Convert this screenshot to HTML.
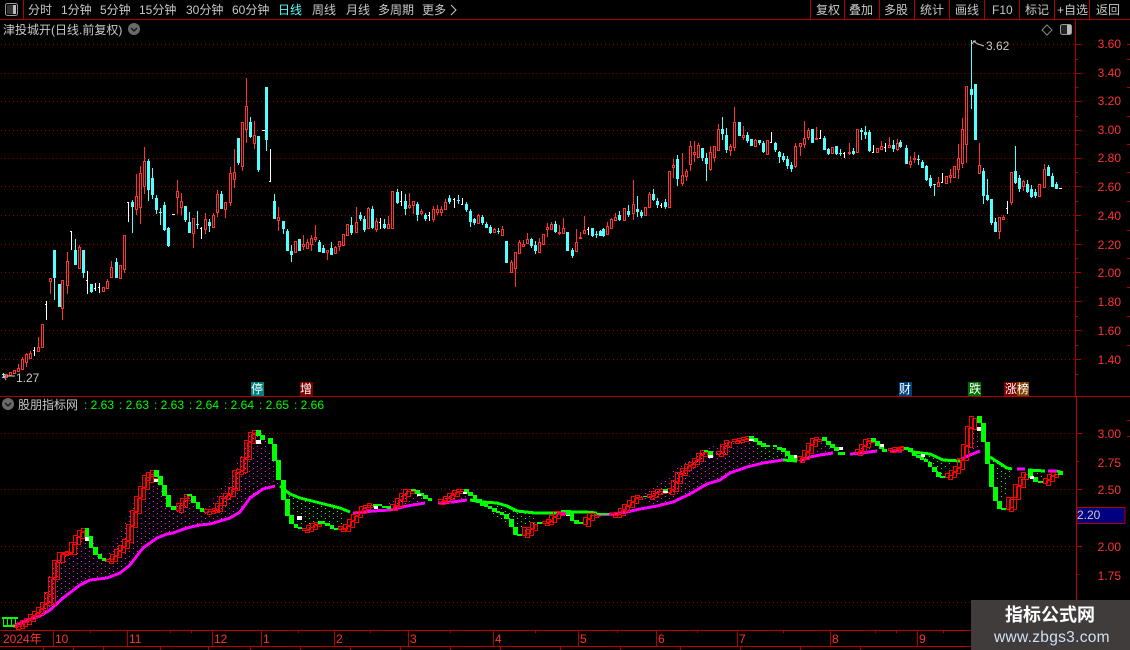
<!DOCTYPE html>
<html><head><meta charset="utf-8"><title>股朋指标网</title>
<style>
html,body{margin:0;padding:0;background:#000;width:1130px;height:650px;overflow:hidden}
svg{display:block}
text{font-family:"Liberation Sans","WenQuanYi Zen Hei","Noto Sans CJK SC",sans-serif;font-size:12px}
.m{fill:#c8c8c8}
.a{fill:#ff3232}
.g{fill:#00ff00}
.w{fill:#fff}
</style></head><body>
<svg width="1130" height="650" viewBox="0 0 1130 650" xmlns="http://www.w3.org/2000/svg">
<defs>
<pattern id="pm" width="8" height="10" patternUnits="userSpaceOnUse"><g fill="#ff00ff" shape-rendering="crispEdges"><rect x="1" y="1" width="1" height="1"/><rect x="1" y="6" width="1" height="1"/><rect x="5" y="3" width="1" height="1"/><rect x="5" y="8" width="1" height="1"/></g></pattern>
<pattern id="pg" width="8" height="10" patternUnits="userSpaceOnUse"><g fill="#00ff00" shape-rendering="crispEdges"><rect x="1" y="1" width="1" height="1"/><rect x="1" y="6" width="1" height="1"/><rect x="5" y="3" width="1" height="1"/><rect x="5" y="8" width="1" height="1"/></g></pattern>
</defs>
<rect width="1130" height="650" fill="#000"/>

<!-- frame -->
<g shape-rendering="crispEdges" stroke="#b00000" fill="none">
<path d="M0 19.5H1130M23.5 0V19M810.5 0V19M844.5 0V19M879.5 0V19M914.5 0V19M949.5 0V19M984.5 0V19M1019.5 0V19M1054.5 0V19M1089.5 0V19"/>
<path d="M0 396.5H1130M1075.5 19V396"/>
<path d="M0 630.5H1075M0 646.5H1075M1076.5 397V640" stroke="#c00000"/>
<path d="M53.5 630V646M127.5 630V646M212.5 630V646M261.5 630V646M334.5 630V646M408.5 630V646M493.5 630V646M578.5 630V646M656.5 630V646M737.5 630V646M830.5 630V646M917.5 630V646"/>
<path d="M90.5 630V633M170.5 630V633M191.5 630V633M298.5 630V633M370.5 630V633M450.5 630V633M535.5 630V633M617.5 630V633M697.5 630V633M783.5 630V633M875.5 630V633M896.5 630V633M943.5 630V633M43.5 646V650M73.5 646V650M103.5 646V650M160.5 646V650M208.5 646V650M250.5 646V650M300.5 646V650M350.5 646V650M400.5 646V650M450.5 646V650M500.5 646V650M560.5 646V650M620.5 646V650M680.5 646V650M740.5 646V650M800.5 646V650M860.5 646V650"/>
<!-- axis ticks -->
<path d="M1075 44.5h6M1075 73.5h6M1075 101.5h6M1075 130.5h6M1075 158.5h6M1075 186.5h6M1075 215.5h6M1075 244.5h6M1075 272.5h6M1075 301.5h6M1075 330.5h6M1075 359.5h6M1075 59.5h3M1075 87.5h3M1075 116.5h3M1075 144.5h3M1075 172.5h3M1075 201.5h3M1075 230.5h3M1075 258.5h3M1075 287.5h3M1075 316.5h3M1075 345.5h3M1075 374.5h3"/>
<path d="M1127 44.5h3M1127 59.5h3M1127 87.5h3M1127 116.5h3M1127 144.5h3M1127 172.5h3M1127 201.5h3M1127 230.5h3M1127 258.5h3M1127 287.5h3M1127 316.5h3M1127 345.5h3M1127 420.5h3M1127 436.5h3"/>
<path d="M1076 433.5h6M1076 461.5h3M1076 489.5h6M1076 518.5h3M1076 546.5h6M1076 574.5h3M1076 602.5h6"/>
</g>
<!-- grid -->
<g stroke="#a00000" stroke-dasharray="1 3" shape-rendering="crispEdges">
<path d="M1 44.5H1075M1 73.5H1075M1 101.5H1075M1 130.5H1075M1 158.5H1075M1 186.5H1075M1 215.5H1075M1 244.5H1075M1 272.5H1075M1 301.5H1075M1 330.5H1075M1 359.5H1075M1 433.5H1075M1 489.5H1075M1 546.5H1075M1 602.5H1075"/>
</g>

<!-- candles -->
<g shape-rendering="crispEdges" fill="none" stroke-width="1">
<path stroke="#ff3232" d="M18.5 364V372M22.5 357V370M26.5 353V367M30.5 351V359M38.5 337V351M50.5 278V294M62.5 280V320M67.5 252V294M79.5 245V268M107.5 279V289M111.5 261V277M124.5 260V273M136.5 174V215M140.5 166V224M144.5 147V194M177.5 180V214M181.5 193V215M193.5 218V248M205.5 213V234M213.5 213V227M217.5 190V217M225.5 202V218M230.5 167V206M234.5 149V188M242.5 122V171M246.5 78V143M254.5 121V149M278.5 207V231M303.5 235V250M307.5 239V248M311.5 235V251M315.5 225V242M327.5 250V260M335.5 246V253M339.5 241V251M356.5 207V232M368.5 207V229M376.5 218V232M388.5 216V229M409.5 193V209M413.5 201V214M421.5 209V215M433.5 206V222M437.5 205V215M441.5 206V216M445.5 199V209M478.5 214V224M494.5 228V232M502.5 226V235M511.5 260V272M515.5 252V287M519.5 240V253M523.5 240V247M527.5 233V243M539.5 238V252M547.5 223V237M551.5 222V229M559.5 225V235M563.5 218V234M576.5 229V251M580.5 232V238M584.5 216V233M607.5 222V234M611.5 218V228M615.5 213V220M633.5 180V220M649.5 192V207M673.5 159V178M682.5 153V186M686.5 169V181M690.5 141V171M694.5 141V162M698.5 143V158M710.5 146V171M714.5 146V162M718.5 124V151M730.5 144V156M734.5 107V151M743.5 126V140M755.5 139V147M795.5 143V168M800.5 143V156M804.5 121V148M808.5 128V140M816.5 127V140M849.5 143V155M881.5 141V149M889.5 137V148M897.5 139V151M910.5 156V168M914.5 152V163M938.5 177V186M950.5 169V183M958.5 144V179M962.5 118V168M966.5 86V163M979.5 143V173M999.5 217V239M1003.5 215V220M1011.5 172V205M1023.5 180V191M1044.5 164V187"/>
<path stroke="#ff3232" fill="#000" d="M5.5 374.5h2V377.5h-2zM9.5 372.5h2V375.5h-2zM13.5 370.5h2V373.5h-2zM17.5 368.5h2V371.5h-2zM21.5 359.5h2V369.5h-2zM25.5 354.5h2V362.5h-2zM29.5 353.5h2V358.5h-2zM37.5 347.5h2V351.5h-2zM41.5 324.5h2V347.5h-2zM49.5 278.5h2V281.5h-2zM61.5 280.5h2V308.5h-2zM66.5 261.5h2V285.5h-2zM78.5 247.5h2V268.5h-2zM102.5 287.5h2V291.5h-2zM106.5 281.5h2V288.5h-2zM110.5 267.5h2V277.5h-2zM119.5 265.5h2V278.5h-2zM123.5 235.5h2V269.5h-2zM135.5 196.5h2V209.5h-2zM139.5 173.5h2V207.5h-2zM143.5 161.5h2V186.5h-2zM176.5 191.5h2V197.5h-2zM180.5 201.5h2V207.5h-2zM192.5 218.5h2V233.5h-2zM204.5 219.5h2V229.5h-2zM212.5 215.5h2V227.5h-2zM216.5 194.5h2V212.5h-2zM224.5 202.5h2V209.5h-2zM229.5 173.5h2V202.5h-2zM233.5 172.5h2V179.5h-2zM241.5 122.5h2V166.5h-2zM245.5 106.5h2V129.5h-2zM253.5 135.5h2V143.5h-2zM277.5 217.5h2V220.5h-2zM294.5 241.5h2V252.5h-2zM302.5 244.5h2V246.5h-2zM306.5 242.5h2V248.5h-2zM310.5 238.5h2V244.5h-2zM314.5 237.5h2V239.5h-2zM326.5 250.5h2V252.5h-2zM334.5 247.5h2V253.5h-2zM338.5 241.5h2V246.5h-2zM342.5 234.5h2V245.5h-2zM346.5 224.5h2V235.5h-2zM355.5 222.5h2V232.5h-2zM367.5 208.5h2V228.5h-2zM375.5 221.5h2V229.5h-2zM387.5 224.5h2V228.5h-2zM391.5 191.5h2V228.5h-2zM408.5 205.5h2V207.5h-2zM412.5 201.5h2V205.5h-2zM420.5 211.5h2V213.5h-2zM432.5 209.5h2V219.5h-2zM436.5 209.5h2V212.5h-2zM440.5 209.5h2V212.5h-2zM444.5 202.5h2V209.5h-2zM477.5 215.5h2V223.5h-2zM493.5 229.5h2V232.5h-2zM501.5 229.5h2V235.5h-2zM510.5 262.5h2V272.5h-2zM514.5 252.5h2V268.5h-2zM518.5 242.5h2V253.5h-2zM522.5 244.5h2V246.5h-2zM526.5 239.5h2V243.5h-2zM538.5 242.5h2V252.5h-2zM542.5 234.5h2V244.5h-2zM546.5 227.5h2V229.5h-2zM550.5 224.5h2V229.5h-2zM558.5 232.5h2V233.5h-2zM562.5 228.5h2V233.5h-2zM575.5 242.5h2V251.5h-2zM579.5 237.5h2V238.5h-2zM583.5 230.5h2V233.5h-2zM606.5 226.5h2V234.5h-2zM610.5 219.5h2V228.5h-2zM614.5 217.5h2V220.5h-2zM623.5 208.5h2V220.5h-2zM632.5 204.5h2V213.5h-2zM644.5 207.5h2V215.5h-2zM648.5 194.5h2V207.5h-2zM668.5 171.5h2V207.5h-2zM672.5 165.5h2V167.5h-2zM681.5 175.5h2V183.5h-2zM685.5 171.5h2V176.5h-2zM689.5 146.5h2V164.5h-2zM693.5 152.5h2V154.5h-2zM697.5 145.5h2V157.5h-2zM709.5 152.5h2V169.5h-2zM713.5 146.5h2V157.5h-2zM717.5 129.5h2V150.5h-2zM729.5 146.5h2V150.5h-2zM733.5 122.5h2V147.5h-2zM742.5 135.5h2V137.5h-2zM754.5 140.5h2V146.5h-2zM766.5 140.5h2V154.5h-2zM794.5 146.5h2V166.5h-2zM799.5 143.5h2V146.5h-2zM803.5 138.5h2V144.5h-2zM807.5 130.5h2V137.5h-2zM815.5 138.5h2V139.5h-2zM831.5 147.5h2V153.5h-2zM848.5 152.5h2V153.5h-2zM856.5 129.5h2V152.5h-2zM876.5 148.5h2V152.5h-2zM880.5 146.5h2V149.5h-2zM888.5 145.5h2V147.5h-2zM896.5 143.5h2V149.5h-2zM909.5 161.5h2V164.5h-2zM913.5 158.5h2V159.5h-2zM937.5 182.5h2V186.5h-2zM945.5 176.5h2V183.5h-2zM949.5 175.5h2V177.5h-2zM953.5 166.5h2V177.5h-2zM957.5 158.5h2V169.5h-2zM961.5 129.5h2V163.5h-2zM965.5 86.5h2V144.5h-2zM978.5 165.5h2V173.5h-2zM998.5 217.5h2V231.5h-2zM1002.5 217.5h2V219.5h-2zM1010.5 172.5h2V202.5h-2zM1022.5 181.5h2V186.5h-2zM1038.5 184.5h2V196.5h-2zM1043.5 169.5h2V187.5h-2z"/>
<path stroke="#54ffff" fill="#54ffff" d="M3.5 373V378M2 374.5h3M54.5 250V300M53.5 250.5h2V277.5h-2zM59.5 284V306M58.5 284.5h2V306.5h-2zM75.5 239V264M74.5 250.5h2V264.5h-2zM83.5 250V278M82.5 250.5h2V272.5h-2zM91.5 284V293M90.5 284.5h2V291.5h-2zM116.5 258V277M115.5 262.5h2V277.5h-2zM132.5 200V233M131.5 202.5h2V206.5h-2zM148.5 159V201M147.5 161.5h2V189.5h-2zM152.5 168V199M151.5 178.5h2V194.5h-2zM156.5 195V214M155.5 198.5h2V209.5h-2zM160.5 208V225M159 212.5h3M164.5 202V231M163.5 205.5h2V229.5h-2zM168.5 227V247M167.5 228.5h2V245.5h-2zM185.5 206V222M184.5 206.5h2V219.5h-2zM189.5 212V232M188.5 222.5h2V232.5h-2zM197.5 211V229M196 224.5h3M209.5 219V232M208.5 222.5h2V225.5h-2zM221.5 191V209M220.5 194.5h2V208.5h-2zM238.5 138V165M237.5 138.5h2V162.5h-2zM250.5 117V138M249.5 122.5h2V136.5h-2zM258.5 136V172M257.5 136.5h2V169.5h-2zM266.5 87V151M265.5 87.5h2V139.5h-2zM274.5 194V218M273.5 201.5h2V218.5h-2zM283.5 221V234M282.5 221.5h2V228.5h-2zM287.5 229V251M286.5 231.5h2V250.5h-2zM291.5 245V262M290.5 251.5h2V254.5h-2zM299.5 239V250M298.5 239.5h2V250.5h-2zM319.5 240V251M318.5 242.5h2V251.5h-2zM323.5 245V252M322.5 248.5h2V252.5h-2zM331.5 242V254M330.5 248.5h2V254.5h-2zM351.5 217V235M350.5 225.5h2V232.5h-2zM360.5 212V221M359.5 215.5h2V218.5h-2zM364.5 216V232M363.5 219.5h2V229.5h-2zM372.5 206V229M371.5 209.5h2V227.5h-2zM384.5 219V229M383.5 224.5h2V227.5h-2zM397.5 189V204M396.5 192.5h2V202.5h-2zM405.5 194V215M404.5 201.5h2V208.5h-2zM417.5 202V221M416.5 204.5h2V214.5h-2zM425.5 213V221M424.5 215.5h2V218.5h-2zM449.5 195V204M448.5 198.5h2V201.5h-2zM458.5 195V204M457 200.5h3M466.5 202V212M465.5 204.5h2V209.5h-2zM470.5 209V227M469.5 211.5h2V221.5h-2zM474.5 218V225M473.5 219.5h2V222.5h-2zM482.5 215V225M481.5 217.5h2V222.5h-2zM486.5 222V228M485.5 224.5h2V227.5h-2zM490.5 225V234M489.5 227.5h2V232.5h-2zM498.5 228V234M497 231.5h3M506.5 241V262M505.5 241.5h2V262.5h-2zM531.5 238V248M530.5 239.5h2V245.5h-2zM535.5 241V254M534.5 245.5h2V250.5h-2zM555.5 221V233M554.5 224.5h2V231.5h-2zM567.5 232V251M566.5 232.5h2V250.5h-2zM572.5 248V258M571.5 250.5h2V255.5h-2zM592.5 228V237M591.5 228.5h2V235.5h-2zM596.5 231V238M595 234.5h3M600.5 230V236M599.5 231.5h2V235.5h-2zM603.5 228V237M602.5 229.5h2V235.5h-2zM619.5 211V221M618.5 215.5h2V219.5h-2zM628.5 205V217M627.5 211.5h2V214.5h-2zM637.5 196V217M636.5 209.5h2V211.5h-2zM641.5 210V218M640.5 212.5h2V215.5h-2zM653.5 189V201M652.5 194.5h2V199.5h-2zM657.5 198V208M656.5 201.5h2V204.5h-2zM665.5 199V209M664.5 202.5h2V206.5h-2zM677.5 155V186M676.5 159.5h2V178.5h-2zM702.5 148V161M701.5 148.5h2V157.5h-2zM706.5 153V181M705.5 158.5h2V163.5h-2zM722.5 117V140M721.5 129.5h2V133.5h-2zM726.5 128V153M725.5 135.5h2V149.5h-2zM739.5 122V135M738.5 122.5h2V135.5h-2zM747.5 132V143M746.5 135.5h2V140.5h-2zM751.5 139V146M750.5 139.5h2V145.5h-2zM759.5 140V145M758.5 140.5h2V142.5h-2zM763.5 141V153M762.5 143.5h2V151.5h-2zM775.5 142V152M774.5 143.5h2V149.5h-2zM779.5 151V163M778.5 152.5h2V156.5h-2zM783.5 153V162M782.5 156.5h2V159.5h-2zM787.5 156V169M786.5 159.5h2V165.5h-2zM791.5 162V172M790.5 165.5h2V168.5h-2zM812.5 129V143M811.5 129.5h2V142.5h-2zM824.5 136V149M823.5 138.5h2V149.5h-2zM828.5 148V155M827.5 149.5h2V153.5h-2zM836.5 146V155M835.5 146.5h2V153.5h-2zM840.5 149V156M839 153.5h3M853.5 148V155M852.5 151.5h2V153.5h-2zM861.5 128V140M860.5 130.5h2V131.5h-2zM865.5 126V139M864.5 132.5h2V134.5h-2zM869.5 130V152M868.5 132.5h2V150.5h-2zM893.5 140V152M892.5 145.5h2V148.5h-2zM900.5 140V148M899.5 142.5h2V146.5h-2zM906.5 145V163M905.5 148.5h2V163.5h-2zM918.5 155V165M917 159.5h3M922.5 160V168M921.5 162.5h2V167.5h-2zM926.5 165V181M925.5 166.5h2V179.5h-2zM930.5 175V188M929.5 178.5h2V185.5h-2zM934.5 184V196M933 184.5h3M971.5 40V109M970.5 89.5h2V94.5h-2zM975.5 84V140M974.5 84.5h2V139.5h-2zM983.5 168V204M982.5 171.5h2V195.5h-2zM987.5 179V201M986.5 195.5h2V199.5h-2zM991.5 199V225M990.5 199.5h2V222.5h-2zM995.5 218V231M994.5 222.5h2V231.5h-2zM1015.5 146V184M1014.5 171.5h2V182.5h-2zM1019.5 175V192M1018.5 178.5h2V188.5h-2zM1027.5 180V193M1026.5 184.5h2V191.5h-2zM1031.5 185V198M1030.5 189.5h2V196.5h-2zM1035.5 189V198M1034.5 192.5h2V195.5h-2zM1048.5 165V175M1047.5 167.5h2V175.5h-2zM1052.5 173V186M1051.5 176.5h2V186.5h-2zM1056.5 182V189M1055.5 184.5h2V188.5h-2z"/>
<path stroke="#fff" d="M34.5 347V356M33 350.5h2M46.5 301V320M45 304.5h2M71.5 231V250M70 231.5h2M87.5 271V294M86 280.5h2M95.5 283V291M94 288.5h2M99.5 283V293M98 287.5h2M128.5 202V222M127 202.5h2M172 214.5h3M201.5 227V239M200 228.5h2M262 130.5h3M270.5 149V181M269 181.5h2M380.5 218V229M379 222.5h2M401.5 191V206M400 201.5h2M429.5 212V221M428 215.5h2M454.5 198V208M453 199.5h2M462.5 198V205M461 204.5h2M588.5 227V235M587 229.5h2M661.5 203V208M660 205.5h2M771.5 132V143M770 142.5h2M820.5 130V139M819 138.5h2M844.5 152V158M843 153.5h2M873.5 145V153M872 152.5h2M885.5 143V152M884 147.5h2M942.5 173V183M941 182.5h2M1007.5 201V214M1006 208.5h2M1059 188.5h3"/>
</g>

<!-- high/low flags -->
<g fill="none" stroke="#c8c8c8" stroke-width="1">
<path d="M972 44L974 41H976M973 41L978 44L984 46"/>
<path d="M2 378L4 376H15M4 376L6 380"/>
</g>
<text x="986" y="50" class="m">3.62</text>
<text x="16" y="382" class="m">1.27</text>

<!-- lower pane -->
<g shape-rendering="crispEdges">
<polygon fill="url(#pm)" points="40,612 52,565 66,552 85,530 105,558 130,510 150,472 172,505 188,495 204,510 232,475 250,432 262,432 278,470 282,485 275,486 263,489 250,498 240,512 230,518 210,524 200,525 187,528 173,533 167,534 157,538 143,548 130,565 120,573 107,578 90,580 80,585 63,598 50,610"/>
<polygon fill="url(#pm)" points="373,504 385,506 407,490 420,494 425,503 407,506 390,510"/>
<polygon fill="url(#pm)" points="440,500 460,489 470,500 453,502"/>
<polygon fill="url(#pm)" points="640,497 700,450 745,437 790,456 783,460 763,463 747,467 730,473 720,480 707,484 690,494 673,502 657,506"/>
<polygon fill="url(#pm)" points="800,456 815,437 835,450 820,455"/>
<polygon fill="url(#pm)" points="855,450 870,438 875,451 862,453"/>
<polygon fill="url(#pm)" points="962,445 975,418 980,451 970,455"/>
<polygon fill="url(#pg)" points="286,495 300,527 325,522 345,525 345,512 320,503 300,498"/>
<polygon fill="url(#pg)" points="470,495 515,532 535,524 535,513 517,511 497,503 483,502"/>
<polygon fill="url(#pg)" points="750,438 790,452 783,460 763,463"/>
<polygon fill="url(#pg)" points="920,458 940,476 958,461 943,460 930,454"/>
<polygon fill="url(#pg)" points="992,460 1003,505 1012,470 1007,468"/>
<polygon fill="url(#pg)" points="1030,472 1040,482 1046,472"/>
</g>

<g fill="none" stroke="#ff00ff" stroke-width="3" stroke-linejoin="round" shape-rendering="crispEdges">
<polyline points="13,626 37,617 40,616 50,610 63,598 80,585 90,580 107,578 120,573 130,565 143,548 157,538 167,534 173,533 187,528 200,525 210,524 230,518 240,512 250,498 263,489 275,486"/>
<polyline points="353,513 373,511 390,510 407,506 425,503"/>
<polyline points="438,503 453,502 467,500"/>
<polyline points="557,513 570,514"/>
<polyline points="597,515 613,514 627,512 640,509 657,506 673,502 690,494 707,484 720,480 730,473 747,467 763,463 783,460"/>
<polyline points="800,461 810,457 820,455 833,453"/>
<polyline points="850,454 862,453 877,451"/>
<polyline points="890,451 902,451"/>
<polyline points="962,459 970,455 980,451"/>
<polyline points="1017,469 1025,469"/>
<polyline points="1048,471 1057,471"/>
</g>
<g fill="none" stroke="#00ff00" stroke-width="3" stroke-linejoin="round" shape-rendering="crispEdges">
<polyline points="280,486 290,494 300,498 320,503 340,508 350,512"/>
<polyline points="470,500 483,502 497,503 507,506 517,511 535,513 557,513"/>
<polyline points="570,512 585,512 597,513"/>
<polyline points="783,460 797,461"/>
<polyline points="907,448 913,452 930,454 943,460 960,461"/>
<polyline points="990,457 1007,468 1012,469"/>
<polyline points="1028,470 1045,471"/>
<polyline points="1057,471 1063,473"/>
</g>

<path id="r" shape-rendering="crispEdges" fill="none" stroke="#ff0000" d="M13.5 624.5h4V627.5h-4zM17.5 622.5h4V626.5h-4zM20.5 620.5h4V624.5h-4zM24.5 618.5h4V622.5h-4zM28.5 614.5h4V619.5h-4zM32.5 611.5h4V615.5h-4zM36.5 607.5h4V612.5h-4zM40.5 602.5h4V608.5h-4zM44.5 592.5h4V603.5h-4zM48.5 577.5h4V602.5h-4zM52.5 560.5h4V577.5h-4zM57.5 552.5h4V560.5h-4zM61.5 552.5h4V553.5h-4zM65.5 551.5h4V552.5h-4zM69.5 542.5h4V552.5h-4zM73.5 535.5h4V542.5h-4zM77.5 530.5h4V536.5h-4zM81.5 528.5h4V531.5h-4zM106.5 559.5h4V561.5h-4zM110.5 554.5h4V559.5h-4zM114.5 549.5h4V555.5h-4zM118.5 545.5h4V550.5h-4zM122.5 539.5h4V546.5h-4zM126.5 524.5h4V540.5h-4zM130.5 510.5h4V525.5h-4zM134.5 496.5h4V511.5h-4zM138.5 486.5h4V497.5h-4zM142.5 475.5h4V487.5h-4zM146.5 472.5h4V480.5h-4zM150.5 470.5h4V476.5h-4zM176.5 503.5h4V510.5h-4zM180.5 498.5h4V505.5h-4zM184.5 494.5h4V498.5h-4zM204.5 509.5h4V512.5h-4zM208.5 509.5h4V511.5h-4zM212.5 508.5h4V510.5h-4zM215.5 503.5h4V509.5h-4zM219.5 496.5h4V503.5h-4zM223.5 493.5h4V497.5h-4zM228.5 487.5h4V494.5h-4zM232.5 470.5h4V488.5h-4zM236.5 469.5h4V472.5h-4zM240.5 457.5h4V470.5h-4zM244.5 440.5h4V457.5h-4zM248.5 432.5h4V441.5h-4zM252.5 430.5h4V433.5h-4zM302.5 528.5h4V530.5h-4zM306.5 525.5h4V529.5h-4zM310.5 523.5h4V527.5h-4zM314.5 522.5h4V524.5h-4zM338.5 526.5h4V529.5h-4zM343.5 524.5h4V529.5h-4zM347.5 519.5h4V525.5h-4zM351.5 514.5h4V520.5h-4zM355.5 511.5h4V515.5h-4zM359.5 506.5h4V511.5h-4zM363.5 505.5h4V507.5h-4zM367.5 503.5h4V505.5h-4zM390.5 504.5h4V508.5h-4zM395.5 498.5h4V505.5h-4zM399.5 493.5h4V499.5h-4zM403.5 489.5h4V494.5h-4zM407.5 489.5h4V491.5h-4zM438.5 499.5h4V502.5h-4zM443.5 496.5h4V500.5h-4zM447.5 493.5h4V497.5h-4zM452.5 490.5h4V494.5h-4zM456.5 489.5h4V491.5h-4zM460.5 489.5h4V491.5h-4zM522.5 527.5h4V535.5h-4zM526.5 527.5h4V533.5h-4zM530.5 522.5h4V528.5h-4zM542.5 521.5h4V523.5h-4zM546.5 519.5h4V522.5h-4zM549.5 515.5h4V520.5h-4zM553.5 511.5h4V516.5h-4zM557.5 511.5h4V513.5h-4zM583.5 517.5h4V524.5h-4zM587.5 513.5h4V518.5h-4zM591.5 513.5h4V515.5h-4zM610.5 513.5h4V515.5h-4zM614.5 512.5h4V515.5h-4zM618.5 508.5h4V513.5h-4zM622.5 504.5h4V509.5h-4zM627.5 500.5h4V505.5h-4zM631.5 496.5h4V501.5h-4zM635.5 495.5h4V497.5h-4zM647.5 494.5h4V497.5h-4zM651.5 491.5h4V495.5h-4zM655.5 489.5h4V492.5h-4zM659.5 489.5h4V491.5h-4zM667.5 488.5h4V492.5h-4zM671.5 480.5h4V489.5h-4zM675.5 472.5h4V481.5h-4zM680.5 468.5h4V473.5h-4zM684.5 464.5h4V468.5h-4zM688.5 462.5h4V465.5h-4zM692.5 458.5h4V462.5h-4zM696.5 453.5h4V459.5h-4zM700.5 450.5h4V454.5h-4zM716.5 451.5h4V454.5h-4zM720.5 444.5h4V452.5h-4zM724.5 440.5h4V445.5h-4zM732.5 439.5h4V441.5h-4zM737.5 438.5h4V440.5h-4zM741.5 437.5h4V439.5h-4zM745.5 436.5h4V438.5h-4zM797.5 456.5h4V460.5h-4zM802.5 450.5h4V457.5h-4zM806.5 443.5h4V451.5h-4zM810.5 438.5h4V444.5h-4zM814.5 437.5h4V439.5h-4zM855.5 449.5h4V453.5h-4zM859.5 444.5h4V450.5h-4zM863.5 439.5h4V445.5h-4zM867.5 438.5h4V440.5h-4zM888.5 448.5h4V450.5h-4zM892.5 447.5h4V449.5h-4zM896.5 447.5h4V448.5h-4zM900.5 446.5h3V447.5h-3zM945.5 473.5h4V477.5h-4zM949.5 470.5h4V475.5h-4zM953.5 466.5h4V471.5h-4zM957.5 458.5h4V467.5h-4zM961.5 444.5h4V458.5h-4zM965.5 426.5h4V445.5h-4zM969.5 416.5h4V427.5h-4zM1006.5 497.5h4V509.5h-4zM1010.5 497.5h3V507.5h-3zM1013.5 484.5h4V497.5h-4zM1018.5 477.5h4V485.5h-4zM1021.5 472.5h4V477.5h-4zM1043.5 478.5h4V483.5h-4zM1047.5 474.5h4V479.5h-4zM1051.5 472.5h4V475.5h-4z"/>
<use href="#r" transform="translate(3,2)"/>

<path shape-rendering="crispEdges" fill="#00ff00" d="M85 528h4v12h-4zM89 536h4v12h-4zM93 547h5v8h-5zM98 554h4v5h-4zM102 558h4v3h-4zM154 470h5v7h-5zM158 476h5v9h-5zM162 485h5v11h-5zM166 495h5v12h-5zM171 506h5v4h-5zM187 494h5v2h-5zM191 496h5v7h-5zM196 502h4v7h-4zM200 508h4v4h-4zM256 430h5v6h-5zM260 435h5v5h-5zM268 438h5v6h-5zM272 444h5v17h-5zM276 460h5v20h-5zM281 480h5v20h-5zM285 499h5v17h-5zM289 515h5v9h-5zM294 524h4v4h-4zM298 527h4v2h-4zM318 521h7v3h-7zM325 523h5v3h-5zM330 525h4v4h-4zM334 528h4v2h-4zM373 504h5v3h-5zM378 504h4v2h-4zM382 506h5v2h-5zM387 506h4v3h-4zM411 489h5v2h-5zM415 490h5v4h-5zM420 493h4v3h-4zM423 495h5v4h-5zM428 498h4v3h-4zM464 489h5v4h-5zM468 492h5v4h-5zM473 495h4v6h-4zM476 499h6v4h-6zM480 503h5v3h-5zM484 504h4v3h-4zM488 506h4v3h-4zM492 508h5v4h-5zM496 511h4v2h-4zM500 512h4v3h-4zM504 514h5v5h-5zM509 519h5v8h-5zM513 527h5v8h-5zM517 534h5v2h-5zM537 522h5v2h-5zM561 510h5v2h-5zM566 510h5v5h-5zM570 513h4v8h-4zM574 520h5v4h-5zM579 522h4v2h-4zM597 513h12v2h-12zM643 496h4v1h-4zM663 489h5v3h-5zM704 450h4v2h-4zM708 451h5v4h-5zM749 436h5v4h-5zM753 438h5v4h-5zM757 441h5v4h-5zM761 443h5v4h-5zM766 445h4v2h-4zM773 445h4v2h-4zM777 447h5v3h-5zM781 448h5v4h-5zM785 451h5v5h-5zM788 455h9v7h-9zM822 437h5v4h-5zM826 441h5v4h-5zM830 444h5v4h-5zM834 447h5v4h-5zM838 452h7v3h-7zM871 438h5v4h-5zM875 441h5v5h-5zM879 445h5v4h-5zM882 449h5v3h-5zM904 447h5v3h-5zM908 448h5v4h-5zM912 452h5v4h-5zM916 455h5v3h-5zM920 457h4v3h-4zM924 459h4v3h-4zM928 462h4v5h-4zM932 467h5v5h-5zM936 472h5v5h-5zM940 476h5v2h-5zM977 416h5v7h-5zM981 423h5v19h-5zM985 442h5v22h-5zM989 464h5v23h-5zM993 487h5v14h-5zM997 501h5v8h-5zM1001 508h5v2h-5zM1028 469h5v9h-5zM1033 477h5v5h-5zM1038 481h5v2h-5zM1058 471h5v4h-5z"/>
<path shape-rendering="crispEdges" fill="#fff" d="M85 537h4v4h-4zM154 479h4v3h-4zM256 440h5v4h-5zM297 516h5v4h-5zM374 506h4v3h-4zM417 494h4v2h-4zM463 492h4v2h-4zM566 515h4v1h-4zM663 491h5v2h-5zM708 455h5v3h-5zM749 439h5v2h-5zM794 455h3v3h-3zM839 447h4v3h-4zM880 444h4v3h-4zM921 454h4v3h-4zM977 427h4v4h-4zM1030 476h4v3h-4z"/>
<!-- left green start -->
<path shape-rendering="crispEdges" fill="none" stroke="#00ff00" stroke-width="2" d="M2 618H18M3 626H15"/>
<path shape-rendering="crispEdges" fill="none" stroke="#00ff00" d="M3.5 619V626M7.5 619V626M11.5 619V626M15.5 619V624"/>

<!-- top menu -->
<rect x="5.5" y="3.5" width="12" height="12" rx="2" fill="none" stroke="#999"/>
<rect x="7" y="5" width="6" height="9" fill="#333"/><rect x="13" y="5" width="3" height="9" fill="#bbb"/>
<g class="m">
<text x="28" y="14">分时</text>
<text x="61" y="14">1分钟</text>
<text x="100" y="14">5分钟</text>
<text x="139" y="14">15分钟</text>
<text x="186" y="14">30分钟</text>
<text x="232" y="14">60分钟</text>
<text x="278" y="14" style="fill:#54ffff">日线</text>
<text x="312" y="14">周线</text>
<text x="346" y="14">月线</text>
<text x="378" y="14">多周期</text>
<text x="422" y="14">更多</text>
<text x="816" y="14">复权</text>
<text x="849" y="14">叠加</text>
<text x="884" y="14">多股</text>
<text x="920" y="14">统计</text>
<text x="955" y="14">画线</text>
<text x="992" y="14">F10</text>
<text x="1025" y="14">标记</text>
<text x="1057" y="14">+自选</text>
<text x="1096" y="14">返回</text>
<text x="3" y="34">津投城开(日线.前复权)</text>
<text x="18" y="409">股朋指标网</text>
</g>
<path d="M451 5L456 10L451 15" fill="none" stroke="#c8c8c8"/>
<circle cx="134" cy="29" r="6" fill="#6a6a6a"/><path d="M131 28L134 31L137 28" fill="none" stroke="#111" stroke-width="1.3"/>
<circle cx="8" cy="404" r="6" fill="#6a6a6a"/><path d="M5 403L8 406L11 403" fill="none" stroke="#111" stroke-width="1.3"/>
<path d="M1047 25L1052 30L1047 35L1042 30Z" fill="none" stroke="#888"/>
<rect x="1060.5" y="24.5" width="11" height="10" rx="2" fill="#222" stroke="#999"/><rect x="1067" y="25" width="4" height="9" fill="#bbb"/>

<!-- legend -->
<g class="g">
<text x="84" y="409">: 2.63</text>
<text x="119" y="409">: 2.63</text>
<text x="154" y="409">: 2.63</text>
<text x="189" y="409">: 2.64</text>
<text x="224" y="409">: 2.64</text>
<text x="259" y="409">: 2.65</text>
<text x="294" y="409">: 2.66</text>
</g>

<!-- markers -->
<g shape-rendering="crispEdges">
<rect x="251" y="382" width="13" height="14" fill="#008080"/>
<rect x="300" y="382" width="13" height="14" fill="#800000"/>
<rect x="899" y="382" width="13" height="14" fill="#004080"/>
<rect x="968" y="382" width="13" height="14" fill="#007000"/>
<rect x="1004" y="382" width="13" height="14" fill="#800000"/>
<rect x="1017" y="382" width="12" height="14" fill="#804000"/>
</g>
<g class="w">
<text x="251" y="393">停</text>
<text x="300" y="393">增</text>
<text x="899" y="393">财</text>
<text x="969" y="393">跌</text>
<text x="1005" y="393">涨</text>
<text x="1017" y="393">榜</text>
</g>

<!-- axis labels -->
<g class="a" text-anchor="end">
<text x="1121" y="48">3.60</text>
<text x="1121" y="77">3.40</text>
<text x="1121" y="105">3.20</text>
<text x="1121" y="134">3.00</text>
<text x="1121" y="162">2.80</text>
<text x="1121" y="191">2.60</text>
<text x="1121" y="220">2.40</text>
<text x="1121" y="249">2.20</text>
<text x="1121" y="277">2.00</text>
<text x="1121" y="306">1.80</text>
<text x="1121" y="335">1.60</text>
<text x="1121" y="364">1.40</text>
<text x="1121" y="438">3.00</text>
<text x="1121" y="467">2.75</text>
<text x="1121" y="494">2.50</text>
<text x="1121" y="551">2.00</text>
<text x="1121" y="580">1.75</text>
</g>
<g class="a">
<text x="3" y="643">2024年</text>
<text x="55" y="643">10</text>
<text x="129" y="643">11</text>
<text x="214" y="643">12</text>
<text x="263" y="643">1</text>
<text x="336" y="643">2</text>
<text x="410" y="643">3</text>
<text x="495" y="643">4</text>
<text x="580" y="643">5</text>
<text x="658" y="643">6</text>
<text x="739" y="643">7</text>
<text x="832" y="643">8</text>
<text x="919" y="643">9</text>
</g>

<!-- price box -->
<rect x="1077" y="507.5" width="48" height="16" fill="#000080" stroke="#b00000" shape-rendering="crispEdges"/>
<text x="1077" y="519" class="m">2.20</text>

<!-- watermark -->
<rect x="971" y="600" width="159" height="50" fill="#403c3c" shape-rendering="crispEdges"/>
<text x="1005" y="621" style="font-size:18px;font-weight:bold;fill:#fff;font-family:'Noto Sans CJK SC','WenQuanYi Zen Hei',sans-serif">指标公式网</text>
<text x="994" y="642" style="font-size:15.5px;fill:#cfe0f5;letter-spacing:.3px">www.zbgs3.com</text>
</svg>
</body></html>
